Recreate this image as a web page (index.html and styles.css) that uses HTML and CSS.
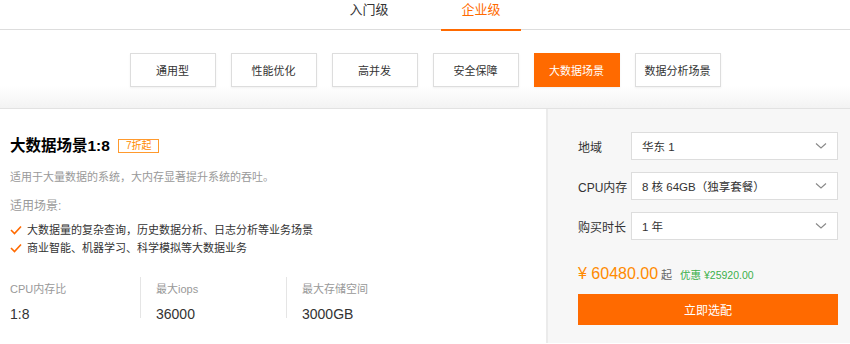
FILE: index.html
```html
<!DOCTYPE html>
<html lang="zh-CN">
<head>
    <meta charset="UTF-8">
    <title>企业级场景</title>
    <link rel="stylesheet" href="styles.css">
</head>
<body>
    <div class="tabs">
        <a class="tab" href="#">入门级</a>
        <a class="tab active" href="#">企业级</a>
    </div>

    <div class="scenes">
        <button class="scene">通用型</button>
        <button class="scene">性能优化</button>
        <button class="scene">高并发</button>
        <button class="scene">安全保障</button>
        <button class="scene active">大数据场景</button>
        <button class="scene">数据分析场景</button>
    </div>

    <div class="main">
        <div class="info">
            <h2 class="title">大数据场景1:8 <span class="badge">7折起</span></h2>
            <p class="desc">适用于大量数据的系统，大内存显著提升系统的吞吐。</p>
            <p class="usage">适用场景:</p>
            <ul class="checks">
                <li><svg width="12" height="10" viewBox="0 0 12 10"><path d="M1 5 L4.5 8.5 L11 1.5" fill="none" stroke="#ff6a00" stroke-width="1.6"/></svg>大数据量的复杂查询，历史数据分析、日志分析等业务场景</li>
                <li><svg width="12" height="10" viewBox="0 0 12 10"><path d="M1 5 L4.5 8.5 L11 1.5" fill="none" stroke="#ff6a00" stroke-width="1.6"/></svg>商业智能、机器学习、科学模拟等大数据业务</li>
            </ul>
            <div class="stats">
                <div class="stat">
                    <div class="stat-label">CPU内存比</div>
                    <div class="stat-value">1:8</div>
                </div>
                <div class="stat">
                    <div class="stat-label">最大iops</div>
                    <div class="stat-value">36000</div>
                </div>
                <div class="stat">
                    <div class="stat-label">最大存储空间</div>
                    <div class="stat-value">3000GB</div>
                </div>
            </div>
        </div>

        <div class="buy">
            <div class="field">
                <label>地域</label>
                <div class="select">华东 1<svg width="12" height="8" viewBox="0 0 12 8"><path d="M1 1.5 L6 6 L11 1.5" fill="none" stroke="#888" stroke-width="1.1"/></svg></div>
            </div>
            <div class="field">
                <label>CPU内存</label>
                <div class="select">8 核 64GB（独享套餐）<svg width="12" height="8" viewBox="0 0 12 8"><path d="M1 1.5 L6 6 L11 1.5" fill="none" stroke="#888" stroke-width="1.1"/></svg></div>
            </div>
            <div class="field">
                <label>购买时长</label>
                <div class="select">1 年<svg width="12" height="8" viewBox="0 0 12 8"><path d="M1 1.5 L6 6 L11 1.5" fill="none" stroke="#888" stroke-width="1.1"/></svg></div>
            </div>
            <div class="price">
                <span class="amount">¥ 60480.00</span>
                <span class="from">起</span>
                <span class="save">优惠 ¥25920.00</span>
            </div>
            <button class="cta">立即选配</button>
        </div>
    </div>
</body>
</html>
```

FILE: styles.css
```css
body {
    font-family: "Liberation Sans", "Noto Sans CJK SC", sans-serif;
    margin: 0;
    padding: 0;
    background: #fff;
    color: #333;
    width: 850px;
    height: 344px;
    overflow: hidden;
}
.tabs {
    display: flex;
    justify-content: center;
    gap: 32px;
    height: 29px;
    border-bottom: 1px solid #ddd;
}
.tab {
    width: 80px;
    text-align: center;
    text-decoration: none;
    color: #333;
    font-size: 13px;
    line-height: 20px;
    box-sizing: border-box;
    height: 31px;
    border-bottom: 2px solid transparent;
}
.tab.active {
    color: #ff6a00;
    border-bottom-color: #ff6a00;
}
.scenes {
    display: flex;
    justify-content: center;
    gap: 15px;
    padding: 23px 0 21px;
    background: linear-gradient(to bottom, #fff 0, #fff 72%, #f3f3f3 100%);
    border-bottom: 1px solid #e2e2e2;
}
.scene {
    width: 86px;
    height: 34px;
    border: 1px solid #ddd;
    background: #fff;
    box-shadow: 0 1px 2px rgba(0, 0, 0, 0.06);
    font-family: inherit;
    font-size: 11px;
    color: #333;
    padding: 0;
    cursor: pointer;
}
.scene.active {
    background: #ff6a00;
    border-color: #ff6a00;
    color: #fff;
}
.main {
    display: flex;
    height: 234px;
}
.info {
    width: 548px;
    box-sizing: border-box;
    padding: 27px 10px 0;
    border-right: 2px solid #ebebeb;
}
.title {
    margin: 0;
    font-size: 15.5px;
    font-weight: bold;
    color: #000;
    line-height: 20px;
    display: flex;
    align-items: center;
}
.badge {
    margin-left: 8px;
    border: 1px solid #ff9a2e;
    color: #ff8a00;
    font-size: 10px;
    font-weight: normal;
    line-height: 12px;
    padding: 0 7px;
}
.desc {
    margin: 13px 0 0;
    font-size: 11px;
    color: #999;
    line-height: 16px;
}
.usage {
    margin: 12px 0 0;
    font-size: 12px;
    color: #999;
    line-height: 18px;
}
.checks {
    list-style: none;
    margin: 6px 0 0;
    padding: 0;
    font-size: 11px;
    color: #333;
}
.checks li {
    display: flex;
    align-items: center;
    gap: 5px;
    line-height: 18px;
}
.stats {
    display: flex;
    margin-top: 20px;
}
.stat {
    width: 130px;
    height: 41px;
}
.stat + .stat {
    border-left: 1px solid #e5e5e5;
    padding-left: 15px;
}
.stat-label {
    font-size: 11px;
    color: #999;
    line-height: 16px;
    margin-top: 4px;
}
.stat-value {
    font-size: 14px;
    color: #333;
    line-height: 18px;
    margin-top: 8px;
}
.buy {
    flex: 1;
    background: #f7f7f7;
    padding: 23px 12px 0 30px;
}
.field {
    display: flex;
    align-items: center;
    margin-bottom: 12px;
}
.field label {
    width: 53px;
    font-size: 12px;
    color: #333;
}
.select {
    flex: 1;
    height: 28px;
    box-sizing: border-box;
    border: 1px solid #ddd;
    background: #fff;
    display: flex;
    align-items: center;
    justify-content: space-between;
    padding: 0 10px;
    font-size: 11.5px;
    color: #333;
}
.price {
    display: flex;
    align-items: baseline;
    margin-top: 25px;
    height: 22px;
}
.amount {
    font-size: 16px;
    color: #ff8a00;
}
.from {
    font-size: 11px;
    color: #666;
    margin-left: 3px;
}
.save {
    font-size: 10.5px;
    color: #3bb04b;
    margin-left: 8px;
}
.cta {
    display: block;
    width: 100%;
    height: 31px;
    margin-top: 7px;
    border: none;
    background: #ff6a00;
    color: #fff;
    font-family: inherit;
    font-size: 12px;
    cursor: pointer;
}
```
